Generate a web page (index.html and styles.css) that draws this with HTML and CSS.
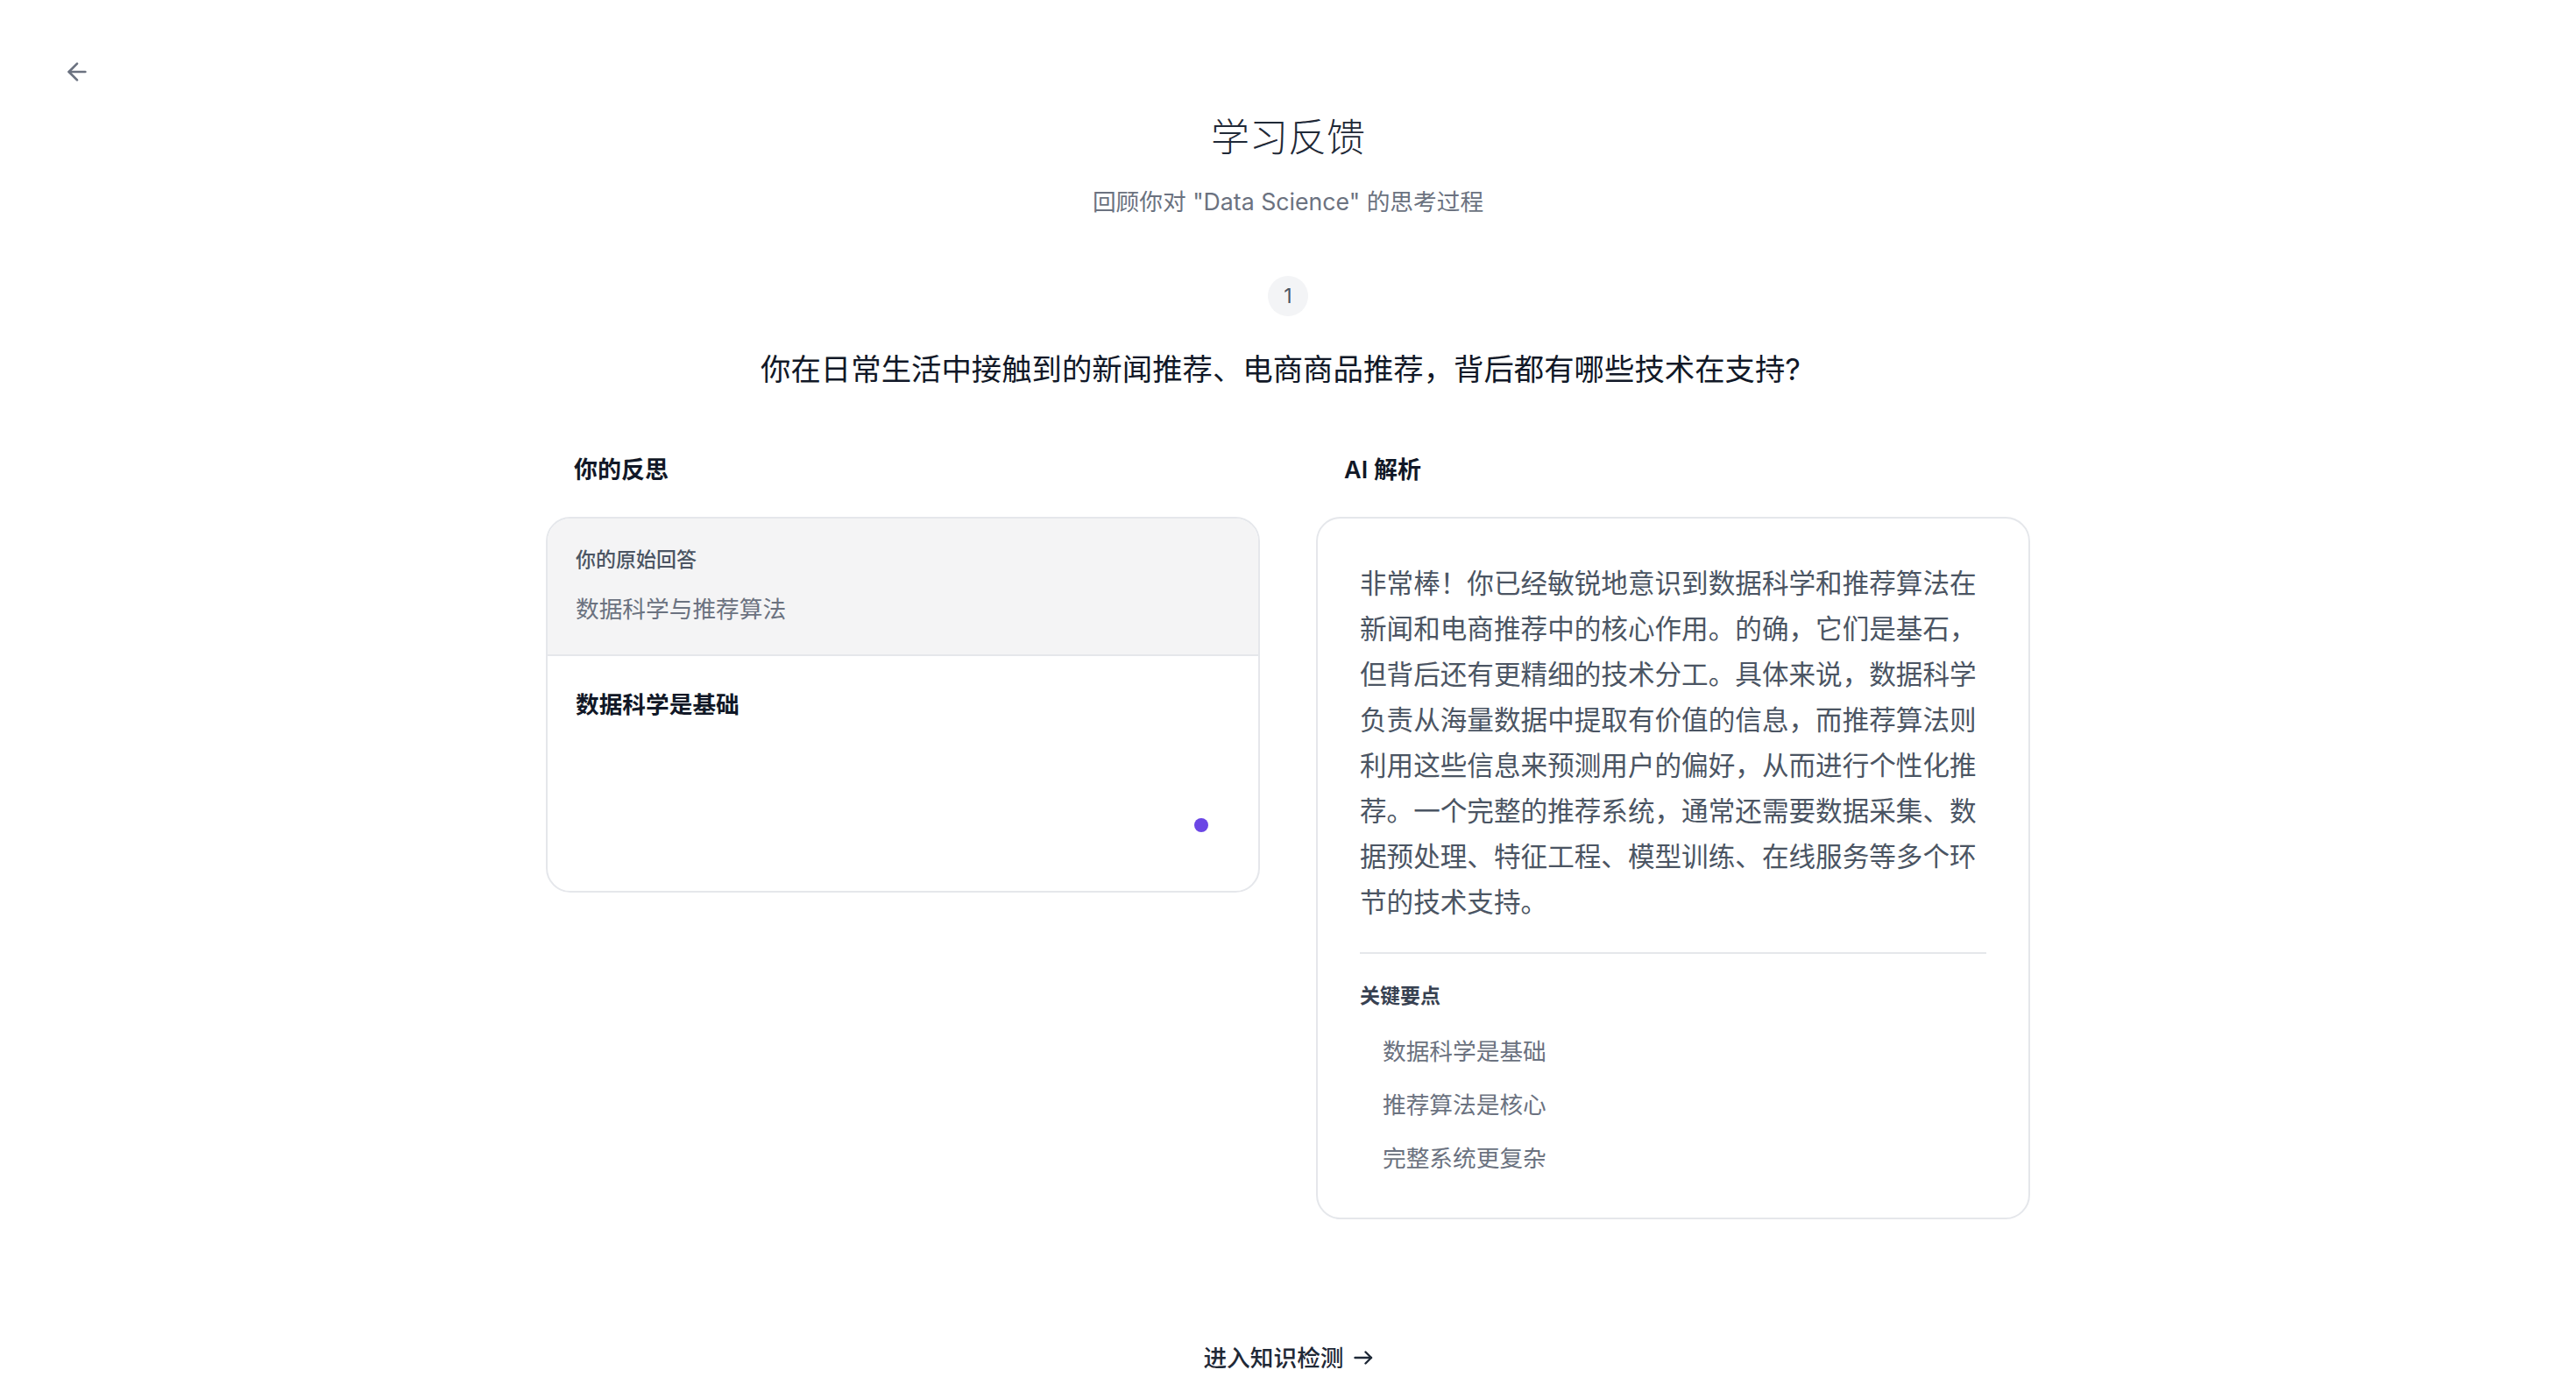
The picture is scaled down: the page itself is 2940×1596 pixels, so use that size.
FILE: index.html
```html
<!DOCTYPE html>
<html lang="zh-CN">
  <head>
    <meta charset="UTF-8" />
    <meta name="viewport" content="width=device-width, initial-scale=1.0" />
    <title>学习反馈</title>

    <link rel="stylesheet" href="styles.css">
  </head>
  <body>
    <header class="topbar">
      <button class="back-button" type="button" aria-label="返回">
        <svg viewBox="0 0 24 24" fill="none" stroke="currentColor" stroke-width="2" stroke-linecap="round" stroke-linejoin="round">
          <path d="m12 19-7-7 7-7" />
          <path d="M19 12H5" />
        </svg>
      </button>
    </header>

    <main class="feedback">
      <h1 class="title">学习反馈</h1>
      <p class="subtitle">回顾你对 "Data Science" 的思考过程</p>

      <div class="step">1</div>
      <h2 class="question">你在日常生活中接触到的新闻推荐、电商商品推荐，背后都有哪些技术在支持?</h2>

      <div class="columns">
        <section class="col">
          <h3 class="col-title">你的反思</h3>
          <div class="card">
            <div class="original">
              <div class="original-label">你的原始回答</div>
              <p class="original-text">数据科学与推荐算法</p>
            </div>
            <div class="reflection">
              <p class="reflection-text">数据科学是基础</p>
              <span class="typing-dot"></span>
            </div>
          </div>
        </section>

        <section class="col">
          <h3 class="col-title">AI 解析</h3>
          <div class="card analysis">
            <p class="analysis-text">非常棒！你已经敏锐地意识到数据科学和推荐算法在新闻和电商推荐中的核心作用。的确，它们是基石，但背后还有更精细的技术分工。具体来说，数据科学负责从海量数据中提取有价值的信息，而推荐算法则利用这些信息来预测用户的偏好，从而进行个性化推荐。一个完整的推荐系统，通常还需要数据采集、数据预处理、特征工程、模型训练、在线服务等多个环节的技术支持。</p>
            <div class="points">
              <div class="points-title">关键要点</div>
              <ul class="points-list">
                <li>数据科学是基础</li>
                <li>推荐算法是核心</li>
                <li>完整系统更复杂</li>
              </ul>
            </div>
          </div>
        </section>
      </div>

      <a class="next-link" href="#">
        进入知识检测
        <svg viewBox="0 0 22 16" fill="none" stroke="currentColor" stroke-width="2.4" stroke-linecap="round" stroke-linejoin="round">
          <path d="M1.5 8H20" />
          <path d="M13.5 1.5 20 8l-6.5 6.5" />
        </svg>
      </a>
    </main>
  </body>
</html>
```

FILE: styles.css
```css
body {
  margin: 0;
  background: #fff;
  color: #111827;
  font-family: Inter, "Noto Sans CJK SC", sans-serif;
}

.topbar {
  height: 32px;
  padding: 66px 0 0 72px;
}

.back-button {
  display: block;
  width: 32px;
  height: 32px;
  padding: 0;
  border: none;
  background: none;
  color: #6b7280;
  cursor: pointer;
}

.back-button svg {
  display: block;
  width: 32px;
  height: 32px;
}

.feedback {
  display: flex;
  flex-direction: column;
  align-items: center;
  padding-bottom: 40px;
}

.title {
  margin: 29px 0 0;
  font-size: 44px;
  line-height: 60px;
  font-weight: 300;
  color: #1f2937;
}

.subtitle {
  margin: 23px 0 0;
  font-size: 26.7px;
  line-height: 40px;
  color: #6b7280;
}

.step {
  display: flex;
  align-items: center;
  justify-content: center;
  width: 46px;
  height: 46px;
  margin-top: 65px;
  border-radius: 50%;
  background: #f3f4f6;
  font-size: 23px;
  color: #4b5563;
}

.question {
  margin: 37px 0 0;
  padding-right: 17px;
  font-size: 34.4px;
  line-height: 48px;
  font-weight: 400;
  color: #111827;
}

.columns {
  display: grid;
  grid-template-columns: 815px 815px;
  gap: 64px;
  align-items: start;
  margin-top: 72px;
}

.col-title {
  margin: 0 0 34px;
  padding-left: 32px;
  font-size: 27px;
  line-height: 38px;
  font-weight: 600;
  color: #111827;
}

.card {
  border: 2px solid #e5e7eb;
  border-radius: 28px;
  background: #fff;
  overflow: hidden;
}

.original {
  padding: 31px 32px 32px;
  background: #f4f4f5;
  border-bottom: 2px solid #e5e7eb;
}

.original-label {
  font-size: 23px;
  line-height: 32px;
  font-weight: 500;
  color: #4b5563;
}

.original-text {
  margin: 20px 0 0;
  font-size: 26.7px;
  line-height: 40px;
  color: #6b7280;
}

.reflection {
  position: relative;
  box-sizing: border-box;
  height: 268px;
  padding: 34px 32px;
}

.reflection-text {
  margin: 0;
  font-size: 26.7px;
  line-height: 42px;
  font-weight: 600;
  color: #111827;
}

.typing-dot {
  position: absolute;
  right: 57px;
  bottom: 67px;
  width: 16px;
  height: 16px;
  border-radius: 50%;
  background: #6b46e5;
}

.analysis {
  padding: 48px;
}

.analysis-text {
  margin: 0;
  font-size: 30.6px;
  line-height: 52px;
  color: #4b5563;
}

.points {
  margin-top: 31px;
  padding-top: 32px;
  border-top: 2px solid #e5e7eb;
}

.points-title {
  font-size: 23px;
  line-height: 32px;
  font-weight: 600;
  color: #374151;
}

.points-list {
  display: flex;
  flex-direction: column;
  gap: 21px;
  margin: 27px 0 0;
  padding: 0 0 0 26px;
  list-style: none;
}

.points-list li {
  font-size: 26.7px;
  line-height: 40px;
  color: #6b7280;
}

.next-link {
  display: flex;
  align-items: center;
  gap: 11px;
  margin-top: 138px;
  font-size: 26.7px;
  line-height: 40px;
  font-weight: 500;
  color: #1f2937;
  text-decoration: none;
}

.next-link svg {
  width: 22px;
  height: 16px;
}
```
